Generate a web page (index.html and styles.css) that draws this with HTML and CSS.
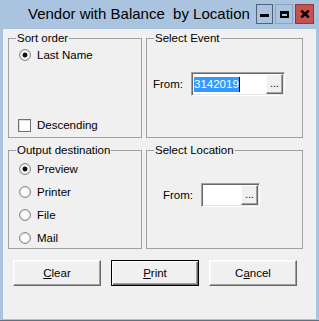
FILE: index.html
```html
<!DOCTYPE html>
<html lang="en">
<head>
<meta charset="UTF-8">
<meta name="viewport" content="width=device-width, initial-scale=1.0">
<title>Vendor with Balance by Location</title>
<link rel="stylesheet" href="styles.css">
</head>
<body>

<div class="window">
    <!-- TITLE BAR -->
    <div class="titlebar">
        <span class="title">Vendor with Balance&nbsp; by Location</span>
        <div class="caption-buttons">
            <span class="cap-btn min">
                <svg width="9" height="4" viewBox="0 0 9 4"><rect x="0" y="0" width="9" height="3" fill="#000"/></svg>
            </span>
            <span class="cap-btn max">
                <svg width="9" height="7" viewBox="0 0 9 7"><path d="M0 0H9V7H0Z M2 3V5H7V3Z" fill="#000" fill-rule="evenodd"/></svg>
            </span>
            <span class="cap-btn close">
                <svg width="10" height="8" viewBox="0 0 10 8"><path d="M1.2 0.6L8.8 7.4M8.8 0.6L1.2 7.4" stroke="#000" stroke-width="2.6"/></svg>
            </span>
        </div>
    </div>

    <div class="client">
        <div class="groups">
            <!-- SORT ORDER -->
            <fieldset class="group">
                <legend>Sort order</legend>
                <div class="group-body sort-order">
                    <label class="option"><span class="radio checked"></span>Last Name</label>
                    <label class="option descending"><span class="check"></span>Descending</label>
                </div>
            </fieldset>

            <!-- SELECT EVENT -->
            <fieldset class="group">
                <legend>Select Event</legend>
                <div class="group-body select-event">
                    <div class="from-row">
                        <span>From:</span>
                        <div class="field event-field">
                            <span class="value"><span class="selected">3142019</span><span class="caret"></span></span>
                            <span class="browse">...</span>
                        </div>
                    </div>
                </div>
            </fieldset>

            <!-- OUTPUT DESTINATION -->
            <fieldset class="group">
                <legend>Output destination</legend>
                <div class="group-body output">
                    <label class="option"><span class="radio checked"></span>Preview</label>
                    <label class="option"><span class="radio"></span>Printer</label>
                    <label class="option"><span class="radio"></span>File</label>
                    <label class="option"><span class="radio"></span>Mail</label>
                </div>
            </fieldset>

            <!-- SELECT LOCATION -->
            <fieldset class="group">
                <legend>Select Location</legend>
                <div class="group-body select-location">
                    <div class="from-row">
                        <span>From:</span>
                        <div class="field location-field">
                            <span class="value"></span>
                            <span class="browse">...</span>
                        </div>
                    </div>
                </div>
            </fieldset>
        </div>

        <!-- ACTIONS -->
        <div class="actions">
            <button class="btn"><u>C</u>lear</button>
            <button class="btn default"><u>P</u>rint</button>
            <button class="btn">C<u>a</u>ncel</button>
        </div>
    </div>
</div>

</body>
</html>
```

FILE: styles.css
```css
:root {
    --frame: #aac4df;
    --face: #f0f0f0;
    --line: #a0a0a0;
    --dark: #696969;
}
* { box-sizing: border-box; }
body {
    margin: 0;
    font-family: "Liberation Sans", Arial, sans-serif;
    font-size: 11.5px;
    color: #000;
    background: #fff;
}
.window {
    width: 319px;
    height: 321px;
    background: var(--frame);
    padding: 0 3px 0 3px;
    border-bottom: 1px solid #5f6f80;
    display: flex;
    flex-direction: column;
}

/* === TITLE BAR === */
.titlebar {
    height: 29px;
    display: flex;
    align-items: flex-start;
    flex-shrink: 0;
}
.title {
    font-size: 15px;
    line-height: 18px;
    padding: 5px 0 0 25px;
    color: #000;
}
.caption-buttons {
    margin-left: auto;
    margin-top: 4px;
    margin-right: 2px;
    display: flex;
    gap: 2px;
}
.cap-btn {
    height: 20px;
    display: flex;
    align-items: center;
    justify-content: center;
    border: 1px solid #8ea3bd;
}
.cap-btn.min { width: 17px; border-color: #4f6279; padding-top: 3px; }
.cap-btn.max { width: 18px; }
.cap-btn.close {
    width: 19px;
    background: #c75050;
    border-color: #8f3a3a;
}

/* === CLIENT === */
.client {
    flex: 1;
    background: var(--face);
    margin-bottom: 1px;
    padding: 2px 0 0 5px;
}
.groups {
    display: grid;
    grid-template-columns: 134px 157px;
    grid-template-rows: 107px 106px;
    column-gap: 4px;
    row-gap: 5px;
}
.group {
    margin: 0;
    padding: 0;
    min-width: 0;
    border: 1px solid var(--line);
}
legend {
    line-height: 14px;
    padding: 0 1px;
    margin-left: 7px;
}
.option {
    display: flex;
    align-items: center;
    gap: 6px;
    line-height: 14px;
    height: 14px;
}
.sort-order { padding: 3px 0 0 10px; }
.descending { margin-top: 56px; }
.output {
    padding: 5px 0 0 10px;
    display: flex;
    flex-direction: column;
    gap: 9px;
}

.radio {
    width: 12px;
    height: 12px;
    border-radius: 50%;
    border: 1px solid #8a8a8a;
    background: radial-gradient(circle, #fff 0 3px, #ececec 4px, #d2d2d2 6px);
}
.radio.checked {
    background: radial-gradient(circle, #111 0 2.2px, #fff 2.8px 3.4px, #e6e6e6 4.2px, #cfcfcf 6px);
}
.check {
    width: 13px;
    height: 13px;
    margin-left: -1px;
    border: 1px solid #707070;
    background: #fff;
    box-shadow: inset 1px 1px #dcdcdc;
}

/* === FROM FIELDS === */
.from-row {
    display: flex;
    align-items: center;
    gap: 8px;
}
.select-event { padding: 27px 0 0 6px; }
.select-location { padding: 26px 0 0 16px; }
.field {
    height: 24px;
    display: flex;
    background: #fff;
    border: 1px solid;
    border-color: var(--line) #fff #fff var(--line);
    box-shadow: inset 1px 1px var(--dark), inset -1px -1px #e3e3e3;
    padding: 1px;
}
.event-field { width: 94px; }
.location-field { width: 59px; }
.value {
    flex: 1;
    display: flex;
    align-items: center;
    padding-left: 1px;
}
.selected {
    background: #3399ff;
    color: #fff;
    line-height: 15px;
}
.caret {
    width: 1px;
    height: 15px;
    background: #000;
}
.browse {
    width: 17px;
    background: var(--face);
    border: 1px solid;
    border-color: #fff var(--dark) var(--dark) #fff;
    box-shadow: inset -1px -1px var(--line);
    font-size: 10px;
    line-height: 10px;
    display: flex;
    align-items: flex-end;
    justify-content: center;
    padding-bottom: 4px;
}

/* === ACTIONS === */
.actions {
    display: flex;
    gap: 10px;
    margin-top: 11px;
    padding-left: 5px;
}
.btn {
    width: 88px;
    height: 26px;
    padding: 0;
    font-family: inherit;
    font-size: 11.5px;
    color: #000;
    background: var(--face);
    border: 1px solid;
    border-color: #fff var(--dark) var(--dark) #fff;
    box-shadow: inset -1px -1px var(--line), inset 1px 1px #f8f8f8;
}
.btn.default {
    border-color: #000;
    box-shadow: inset 1px 1px #fff, inset -1px -1px var(--dark), inset -2px -2px var(--line);
}
```
